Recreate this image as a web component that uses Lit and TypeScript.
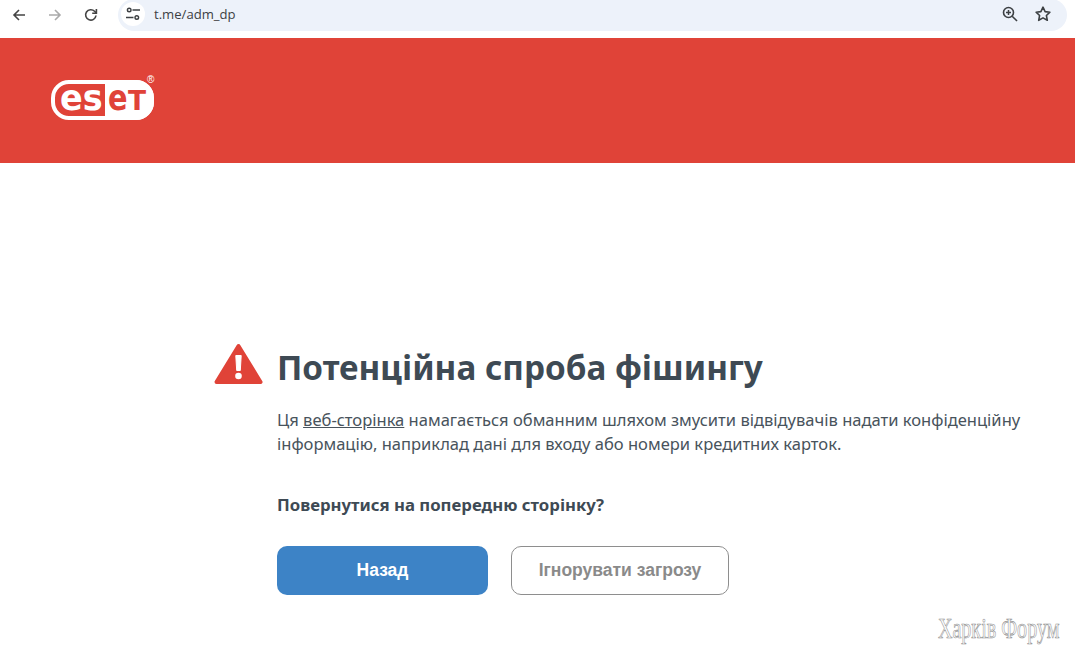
import { LitElement, html, css } from "lit";
import { customElement } from "lit/decorators.js";

@customElement("app-root")
export class AppRoot extends LitElement {
  static styles = css`
    :host { display: block; position: relative; width: 1075px; height: 654px; overflow: hidden; background: #fff; font-family: "Noto Sans", "Open Sans", sans-serif; color: #424d56; }
    .chrome { height: 38px; display: flex; align-items: flex-start; background: #fff; }
    .nav { display: flex; padding: 5px 0 0 7px; width: 111px; box-sizing: border-box; }
    .nav .ic { width: 24px; height: 20px; margin-right: 12px; display: flex; align-items: center; justify-content: center; }
    .nav .ic:last-child { margin-right: 0; }
    svg { display: block; }
    .omni { width: 949px; height: 32px; box-sizing: border-box; padding-bottom: 2px; margin-left: 7px; margin-top: -1px; border-radius: 16px; background: #edf2fa; display: flex; align-items: center; }
    .tune { width: 24px; height: 24px; margin-left: 3px; border-radius: 50%; background: #fff; display: flex; align-items: center; justify-content: center; }
    .url { margin-left: 9px; font: 13.1px "Open Sans", "Noto Sans", sans-serif; color: #3c4043; flex: 1; }
    .end { display: flex; gap: 15px; padding-right: 15px; align-items: center; }
    .banner { height: 125px; background: #e04338; display: flex; align-items: flex-start; padding: 36px 0 0 51px; box-sizing: border-box; }
    .main { padding: 179px 0 0 214px; }
    .head { display: flex; align-items: center; gap: 14px; height: 52px; }
    .warn { margin-bottom: 8px; }
    h1 { margin: 0 0 2px; font: 700 33.25px/50px "Noto Sans", sans-serif; color: #3e4a54; white-space: nowrap; }
    .body { padding-left: 63px; }
    p { margin: 0; }
    .desc { margin-top: 14px; font-size: 16.55px; line-height: 24px; color: #48535c; white-space: nowrap; }
    .desc a { color: inherit; text-decoration: underline; }
    .q { margin-top: 37px; font-size: 16.75px; line-height: 24px; font-weight: 700; color: #3e4a54; }
    .btns { display: flex; gap: 23px; margin-top: 29px; }
    .btn { height: 49px; border-radius: 10px; box-sizing: border-box; display: flex; align-items: center; justify-content: center; font: 700 17.5px "Liberation Sans", Arial, sans-serif; }
    .primary { width: 211px; background: #3d83c6; color: #fff; }
    .ghost { width: 218px; border: 1px solid #8e8e8e; color: #8a8a8a; background: #fff; }
    .mark { position: absolute; right: 16px; bottom: 9px; font: 30px "Liberation Serif", serif; color: #fff; -webkit-text-stroke: 0.7px #909090; white-space: nowrap; transform: scaleX(0.67); transform-origin: right center; }
  `;

  render() {
    return html`
      <div class="chrome">
        <div class="nav">
          <div class="ic"><svg width="16" height="16" viewBox="0 0 16 16" fill="none" stroke="#444" stroke-width="1.6"><path d="M14 8H3M8 3 3 8l5 5"/></svg></div>
          <div class="ic"><svg width="16" height="16" viewBox="0 0 16 16" fill="none" stroke="#aaa" stroke-width="1.6"><path d="M2 8h11M8 3l5 5-5 5"/></svg></div>
          <div class="ic"><svg width="16" height="16" viewBox="0 0 16 16" fill="none" stroke="#444" stroke-width="1.6"><path d="M13 8.5A5.2 5.2 0 1 1 11.6 4.3L13.2 6"/><path d="M13.4 2v4.2H9.2" /></svg></div>
        </div>
        <div class="omni">
          <div class="tune"><svg width="16" height="16" viewBox="0 0 16 16" fill="none" stroke="#3c4043" stroke-width="1.4"><circle cx="4.2" cy="4" r="1.8"/><path d="M7.5 4H15M1 11.5h7.5"/><circle cx="11.8" cy="11.5" r="1.8"/></svg></div>
          <div class="url">t.me/adm_dp</div>
          <div class="end">
            <svg width="18" height="18" viewBox="0 0 18 18" fill="none" stroke="#3c4043" stroke-width="1.6"><circle cx="7.5" cy="7.5" r="5"/><path d="M11.2 11.2 16 16"/><path d="M5 7.5h5M7.5 5v5" stroke-width="1.5"/></svg>
            <svg width="18" height="18" viewBox="0 0 18 18" fill="none" stroke="#3c4043" stroke-width="1.6" stroke-linejoin="round"><path d="M9 2.2l2.1 4.4 4.8.6-3.5 3.3.9 4.8L9 12.9l-4.3 2.4.9-4.8L2.1 7.2l4.8-.6z"/></svg>
          </div>
        </div>
      </div>
      <div class="banner">
        <svg width="110" height="48" viewBox="0 0 110 48">
          <rect x="2" y="8" width="99" height="36" rx="16" fill="#e04338" stroke="#fff" stroke-width="4"/>
          <path d="M54 6h31a18 18 0 0 1 18 18v4a18 18 0 0 1-18 18H54z" fill="#fff"/>
          <text transform="translate(9 36) scale(.93 1)" font-family="'DejaVu Sans','Liberation Sans',sans-serif" font-weight="700" font-size="36" fill="#fff">es</text>
          <text transform="translate(57 36) scale(.8 1)" font-family="'DejaVu Sans','Liberation Sans',sans-serif" font-weight="700" font-size="36" fill="#e04338">e</text>
          <text transform="translate(77 36) scale(.98 1)" font-family="'DejaVu Sans','Liberation Sans',sans-serif" font-weight="700" font-size="27" fill="#e04338">T</text>
          <text x="96" y="9" font-family="'Liberation Sans',sans-serif" font-size="10" fill="#fff">®</text>
        </svg>
      </div>
      <div class="main">
        <div class="head">
          <svg class="warn" width="49" height="42" viewBox="0 0 49 42">
            <path d="M24.5 3 46.5 39H2.5z" fill="#e04338" stroke="#e04338" stroke-width="4" stroke-linejoin="round"/>
            <path d="M21.8 12.5h5.4l-.9 15h-3.6z" fill="#fff" stroke="#fff" stroke-width="1" stroke-linejoin="round"/>
            <circle cx="24.5" cy="33" r="3.3" fill="#fff"/>
          </svg>
          <h1>Потенційна спроба фішингу</h1>
        </div>
        <div class="body">
          <p class="desc">Ця <a>веб-сторінка</a> намагається обманним шляхом змусити відвідувачів надати конфіденційну<br>інформацію, наприклад дані для входу або номери кредитних карток.</p>
          <p class="q">Повернутися на попередню сторінку?</p>
          <div class="btns">
            <div class="btn primary">Назад</div>
            <div class="btn ghost">Ігнорувати загрозу</div>
          </div>
        </div>
      </div>
      <div class="mark">Харків Форум</div>
    `;
  }
}
